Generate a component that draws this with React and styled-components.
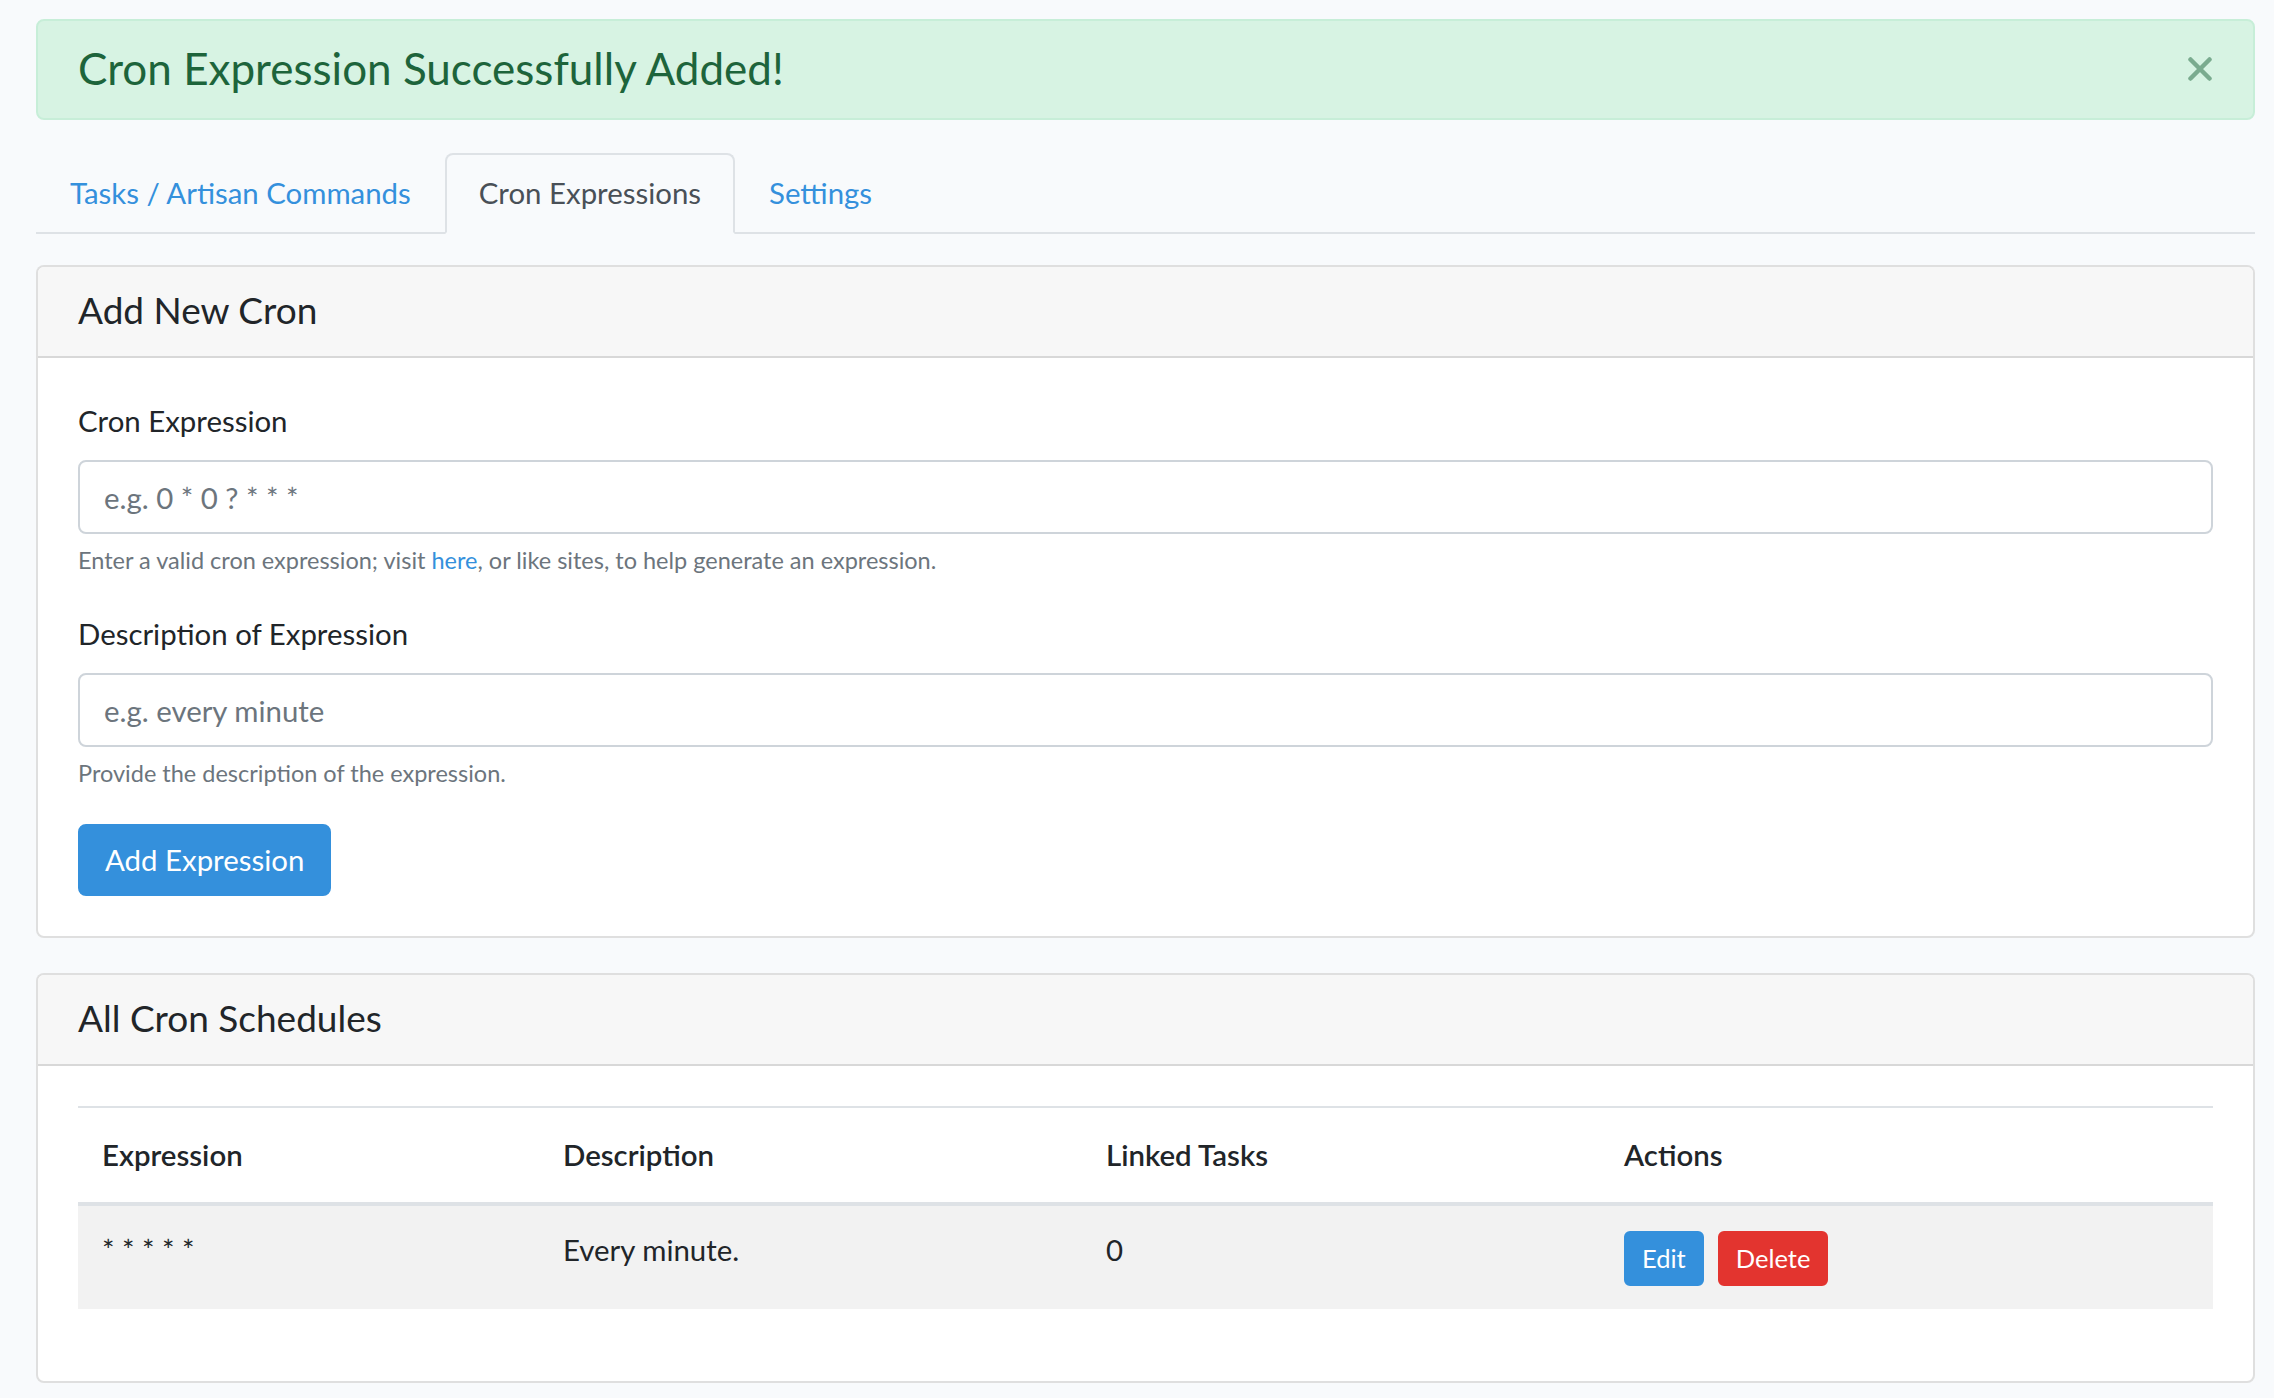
import React from "react";
import styled, { createGlobalStyle } from "styled-components";

const GlobalStyle = createGlobalStyle`
  html, body {
    margin: 0;
    padding: 0;
    background: #f8fafc;
  }
  body {
    font-family: Lato, "Noto Sans", "Liberation Sans", sans-serif;
    font-size: 29.4px;
    line-height: 1.6;
    color: #212529;
  }
  * { box-sizing: border-box; }
`

const Page = styled.div`
  padding: 19px 19px 16px 36px;
`

const Alert = styled.div`
  position: relative;
  display: flex;
  align-items: center;
  justify-content: space-between;
  padding: 23px 40px 25px;
  background: #d7f3e3;
  border: 2px solid #c7eed8;
  border-radius: 8px;
  color: #1d643b;
  font-size: 44px;
  line-height: 49px;
  margin-bottom: 33px;
`

const CloseButton = styled.button`
  border: none;
  background: transparent;
  padding: 0;
  margin-right: 1px;
  cursor: pointer;
  display: flex;
  align-items: center;
`

const Tabs = styled.ul`
  display: flex;
  list-style: none;
  margin: 0 0 31px 0;
  padding: 0;
  border-bottom: 2px solid #dee2e6;
`

const Tab = styled.li`
  margin-bottom: -2px;
`

const TabLink = styled.a`
  display: block;
  padding: 15px 32px 16px;
  line-height: 46px;
  border: 2px solid ${p => (p.$active ? "#dee2e6" : "transparent")};
  border-bottom-color: ${p => (p.$active ? "#f8fafc" : "transparent")};
  border-radius: 8px 8px 0 0;
  color: ${p => (p.$active ? "#495057" : "#3490dc")};
  background: ${p => (p.$active ? "#f8fafc" : "transparent")};
  text-decoration: none;
  cursor: pointer;
`

const Card = styled.div`
  background: #fff;
  border: 2px solid rgba(0, 0, 0, 0.125);
  border-radius: 8px;
  margin-bottom: 35px;
  overflow: hidden;
`

const CardHeader = styled.div`
  background: #f7f7f7;
  border-bottom: 2px solid rgba(0, 0, 0, 0.125);
  padding: 22px 40px 26px;
`

const CardTitle = styled.h4`
  margin: 0;
  font-size: 37px;
  font-weight: 400;
  line-height: 41px;
`

const CardBody = styled.div`
  padding: 40px;
`

const FormGroup = styled.div`
  margin-bottom: 32px;
`

const Label = styled.label`
  display: block;
  margin-bottom: 16px;
  line-height: 46px;
`

const Input = styled.input`
  display: block;
  width: 100%;
  height: 74px;
  padding: 12px 24px;
  font-family: inherit;
  font-size: 29.4px;
  color: #495057;
  background: #fff;
  border: 2px solid #ced4da;
  border-radius: 8px;
  outline: none;
  &::placeholder {
    color: #6c757d;
    opacity: 1;
  }
`

const HelpText = styled.small`
  display: block;
  margin-top: 8px;
  font-size: 23.5px;
  line-height: 37px;
  color: #6c757d;
`

const HelpLink = styled.a`
  color: #3490dc;
  text-decoration: none;
`

const Button = styled.button`
  display: inline-block;
  font-family: inherit;
  color: #fff;
  background: ${p => p.$bg};
  border: 2px solid ${p => p.$bg};
  border-radius: ${p => (p.$small ? "6px" : "8px")};
  font-size: ${p => (p.$small ? "25.5px" : "29.4px")};
  line-height: ${p => (p.$small ? "37px" : "44px")};
  padding: ${p => (p.$small ? "7px 16px" : "12px 25px")};
  cursor: pointer;
`

const Table = styled.table`
  width: 100%;
  border-collapse: collapse;
  margin-bottom: 32px;
`

const Th = styled.th`
  text-align: left;
  font-weight: 600;
  padding: 24px;
  line-height: 46px;
  vertical-align: bottom;
  border-top: 2px solid #dee2e6;
  border-bottom: 4px solid #dee2e6;
  width: ${p => p.$w};
`

const Row = styled.tr`
  background: ${p => (p.$striped ? "#f2f2f2" : "transparent")};
`

const Td = styled.td`
  padding: 21px 24px 23px;
  line-height: 46px;
  vertical-align: top;
`

const Actions = styled.div`
  display: flex;
  gap: 14px;
  padding-top: 4px;
`

const CloseIcon = () => (
  <svg width="24" height="24" viewBox="0 0 24 24">
    <path d="M2.5 2.5 L21.5 21.5 M21.5 2.5 L2.5 21.5" stroke="#7aab8f" strokeWidth="4.5" strokeLinecap="round" />
  </svg>
)

const crons = [
  { expression: "* * * * *", description: "Every minute.", linked: 0 },
]

export default function App() {
  return (
    <Page>
      <GlobalStyle />
      <Alert>
        <span>Cron Expression Successfully Added!</span>
        <CloseButton aria-label="Close"><CloseIcon /></CloseButton>
      </Alert>

      <Tabs>
        <Tab><TabLink>Tasks / Artisan Commands</TabLink></Tab>
        <Tab><TabLink $active>Cron Expressions</TabLink></Tab>
        <Tab><TabLink>Settings</TabLink></Tab>
      </Tabs>

      <Card>
        <CardHeader>
          <CardTitle>Add New Cron</CardTitle>
        </CardHeader>
        <CardBody>
          <FormGroup>
            <Label>Cron Expression</Label>
            <Input placeholder="e.g. 0 * 0 ? * * *" />
            <HelpText>
              Enter a valid cron expression; visit <HelpLink>here</HelpLink>, or like sites, to help generate an expression.
            </HelpText>
          </FormGroup>
          <FormGroup>
            <Label>Description of Expression</Label>
            <Input placeholder="e.g. every minute" />
            <HelpText>Provide the description of the expression.</HelpText>
          </FormGroup>
          <Button $bg="#3490dc">Add Expression</Button>
        </CardBody>
      </Card>

      <Card>
        <CardHeader>
          <CardTitle>All Cron Schedules</CardTitle>
        </CardHeader>
        <CardBody>
          <Table>
            <thead>
              <tr>
                <Th $w="461px">Expression</Th>
                <Th $w="543px">Description</Th>
                <Th $w="518px">Linked Tasks</Th>
                <Th>Actions</Th>
              </tr>
            </thead>
            <tbody>
              {crons.map((c, i) => (
                <Row key={i} $striped={i % 2 === 0}>
                  <Td>{c.expression}</Td>
                  <Td>{c.description}</Td>
                  <Td>{c.linked}</Td>
                  <Td>
                    <Actions>
                      <Button $small $bg="#3490dc">Edit</Button>
                      <Button $small $bg="#e3342f">Delete</Button>
                    </Actions>
                  </Td>
                </Row>
              ))}
            </tbody>
          </Table>
        </CardBody>
      </Card>
    </Page>
  );
}
